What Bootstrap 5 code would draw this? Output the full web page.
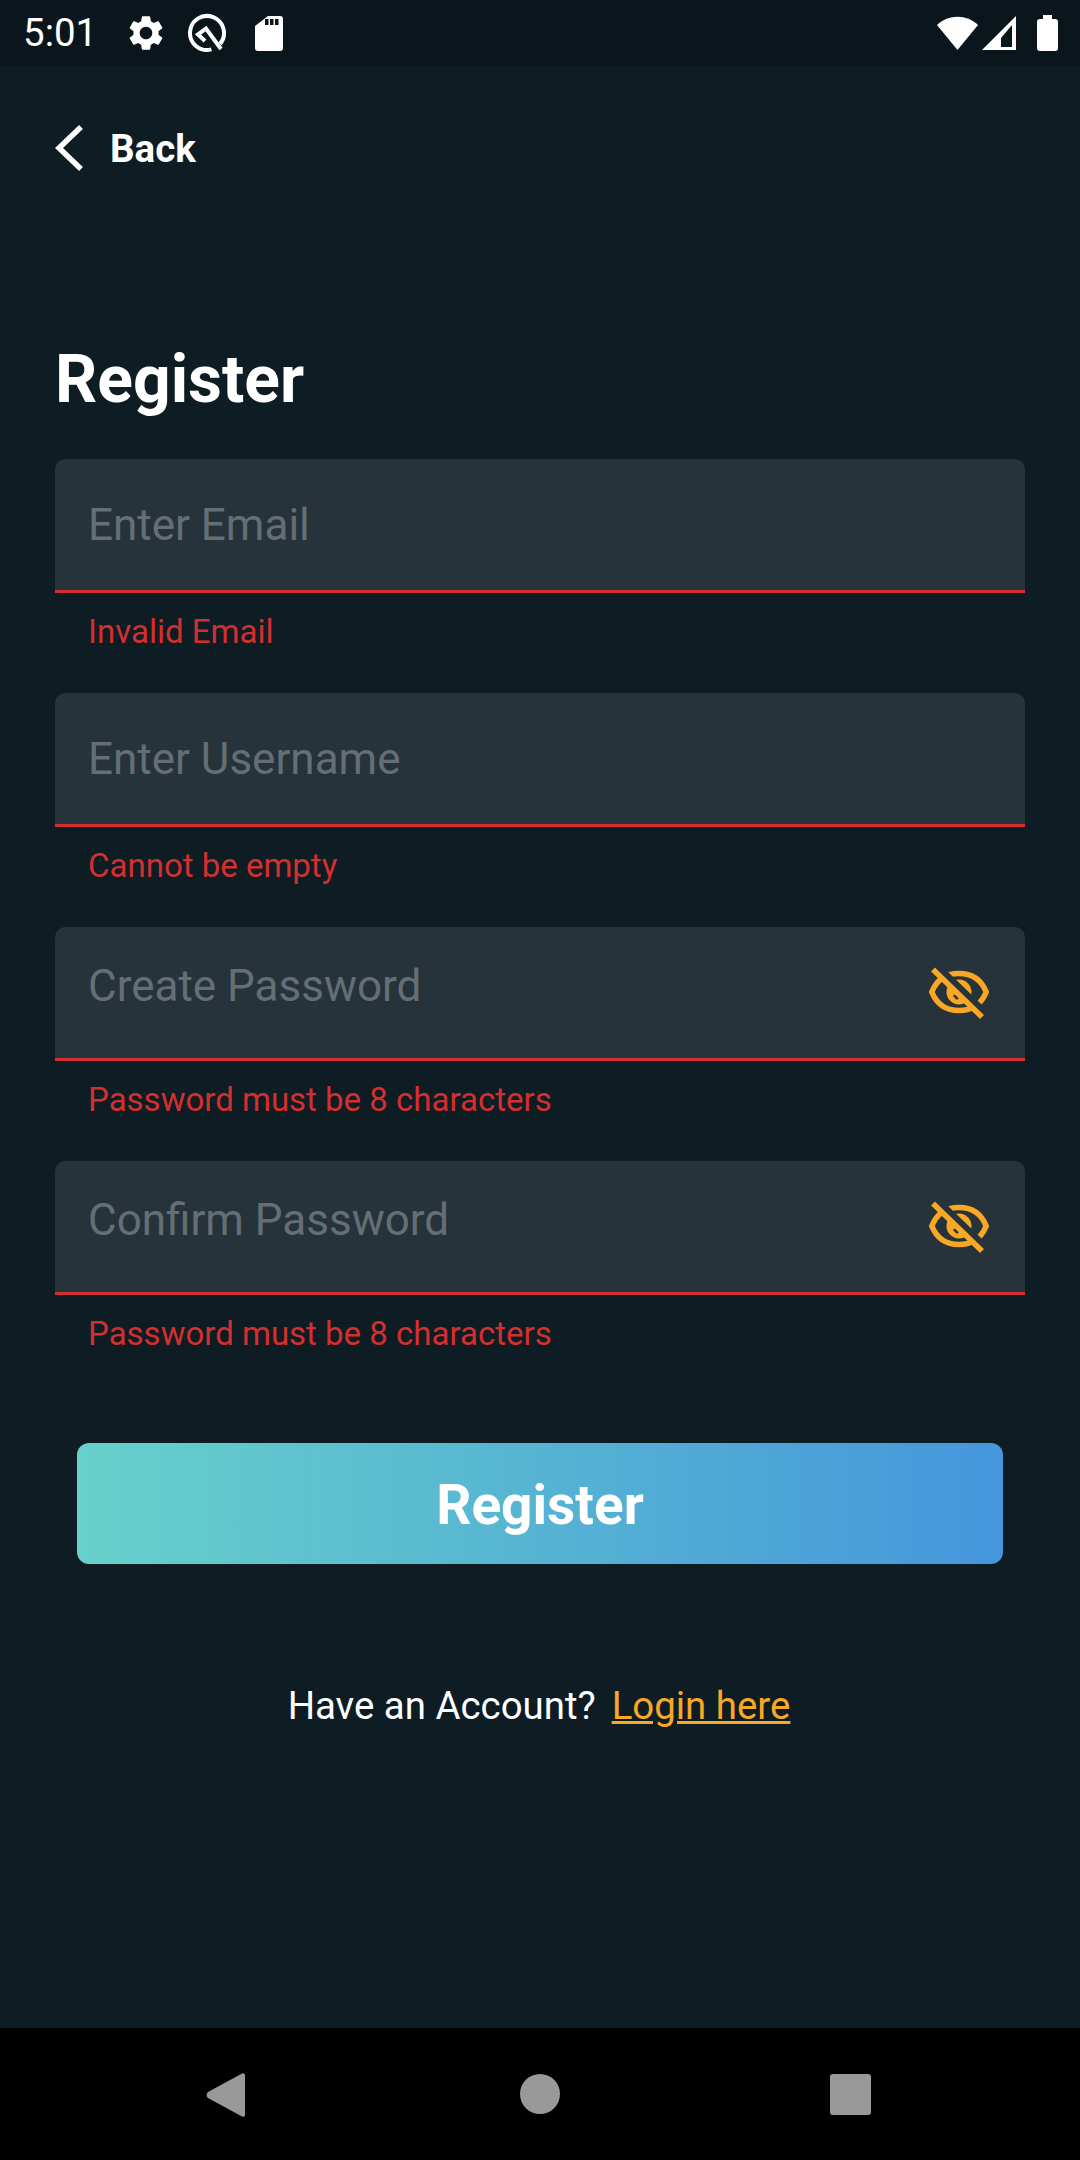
<!DOCTYPE html>
<html lang="en">
<head>
<meta charset="utf-8">
<title>Register</title>
<link href="https://cdn.jsdelivr.net/npm/bootstrap@5.3.0/dist/css/bootstrap.min.css" rel="stylesheet">
<style>
html,body{margin:0;height:2160px;background:#0e1c23;font-family:Roboto,"Liberation Sans",sans-serif;color:#fff}
.screen{height:2160px;width:1080px}
.status-strip{height:66px;background:#0a161b;padding:0 22px 0 23px;flex:none}
.status-time{font-size:38.500px;line-height:1;width:102px}
.status-left svg,.status-right svg{display:block}
.ico-q{margin-left:20px}
.ico-sd{margin-left:28px}
.ico-signal{margin-left:4px}
.ico-batt{margin-left:20px}
.main-area{flex:1 1 auto;padding:0 55px}
.back-row{height:84px;margin-top:40px;gap:27px;color:#fff;text-decoration:none;font-size:38.500px;font-weight:700;line-height:1}
.back-row span{padding-top:2px}
.back-row:hover{color:#fff}
.page-title{font-size:66px;font-weight:700;line-height:1;margin:157px 0 46px}
.field-wrap{height:134px;background:#27333a;border-radius:10px 10px 0 0;border-bottom:3px solid #d32f2f}
.field-input{background:transparent;border:0;border-radius:0;color:#fff;font-size:44px;line-height:52px;height:131px;padding:0 33px}
.field-input::placeholder{color:#646f75;opacity:1}
.field-input:focus{background:transparent;box-shadow:none;color:#fff}
.field-pass{padding-bottom:13px;padding-right:110px}
.eye-btn{position:absolute;right:36px;top:40px;line-height:0}
.field-error{color:#d32f2f;font-size:33px;line-height:38px;padding:20px 33px 0;height:100px}
.submit-btn{display:block;width:926px;height:121px;margin:48px auto 0 22px;padding:4px 0 0;border:0;border-radius:12px;background:linear-gradient(90deg,#67d1ca,#4596dc);color:#fff;font-size:55px;font-weight:700}
.login-row{margin-top:120px;font-size:38.400px;line-height:44px;gap:16px;padding-right:2px}
.login-row a{color:#f9a825}
.sys-nav{height:132px;background:#000;flex:none;position:relative}
.sys-nav svg{position:absolute}
.nav-back{left:205px;top:44px}
.nav-home{left:520px;top:46px}
.nav-recent{left:830px;top:46px}
</style>
</head>
<body>
<svg width="0" height="0" class="position-absolute">
  <defs>
    <symbol id="eye-off" viewBox="0 0 60 52">
      <circle cx="30" cy="25" r="12.500" fill="#f9a825"/>
      <path d="M2.800 25C8 12 18 6.500 30 6.500s22 5.500 27.200 18.500C52 38 42 43.500 30 43.500S8 38 2.800 25z" fill="none" stroke="#f9a825" stroke-width="5.500"/>
      <path d="M7.800-1.400L56.800 46.100" stroke="#27333a" stroke-width="6.500" fill="none"/>
      <path d="M25 28l4 4" stroke="#27333a" stroke-width="3" fill="none"/>
      <path d="M4 2.500L53 50" stroke="#f9a825" stroke-width="5.500" fill="none"/>
    </symbol>
  </defs>
</svg>
<div class="screen d-flex flex-column">
  <div class="status-strip d-flex align-items-center justify-content-between">
    <div class="status-left d-flex align-items-center">
      <span class="status-time">5:01</span>
      <svg width="42" height="42" viewBox="0 0 24 24" fill="#fff"><path d="M19.14 12.94c.04-.3.06-.61.06-.94 0-.32-.02-.64-.07-.94l2.03-1.58c.18-.14.23-.41.12-.61l-1.92-3.32c-.12-.22-.37-.29-.59-.22l-2.39.96c-.5-.38-1.03-.7-1.62-.94l-.36-2.54c-.04-.24-.24-.41-.48-.41h-3.84c-.24 0-.43.17-.47.41l-.36 2.54c-.59.24-1.13.57-1.62.94l-2.39-.96c-.22-.08-.47 0-.59.22L2.74 8.87c-.12.21-.08.47.12.61l2.03 1.58c-.05.3-.09.63-.09.94s.02.64.07.94l-2.03 1.58c-.18.14-.23.41-.12.61l1.92 3.32c.12.22.37.29.59.22l2.39-.96c.5.38 1.03.7 1.62.94l.36 2.54c.05.24.24.41.48.41h3.84c.24 0 .44-.17.47-.41l.36-2.54c.59-.24 1.13-.56 1.62-.94l2.39.96c.22.08.47 0 .59-.22l1.92-3.32c.12-.22.07-.47-.12-.61l-2.01-1.58zM12 15.6c-1.98 0-3.6-1.62-3.6-3.6s1.62-3.6 3.6-3.6 3.6 1.62 3.6 3.6-1.62 3.6-3.6 3.6z"/></svg>
      <svg class="ico-q" width="40" height="40" viewBox="0 0 40 40" fill="none" stroke="#fff" stroke-width="4"><path d="M24.400 36.400A17 17 0 1 1 33 30.900"/><path d="M34 36L19 15.500 11 21.500l7 6.500"/></svg>
      <svg class="ico-sd" width="28" height="35" viewBox="0 0 28 35" fill="#fff" fill-rule="evenodd"><path d="M13 0h12a3 3 0 0 1 3 3v29a3 3 0 0 1-3 3H3a3 3 0 0 1-3-3V10zM10 3v6h3.500V3zM15 3v6h3.500V3zM20 3v6h3.500V3z"/></svg>
    </div>
    <div class="status-right d-flex align-items-center">
      <svg width="41" height="36" viewBox="0 0 41 36" fill="#fff"><path d="M20.500 35L0 10C11 -1 30 -1 41 10z"/></svg>
      <svg class="ico-signal" width="35" height="36" viewBox="0 0 35 36"><path fill-rule="evenodd" fill="#fff" d="M0 35L34 1v34zM19 23L30 10v22H19z"/></svg>
      <svg class="ico-batt" width="21" height="36" viewBox="0 0 21 36" fill="#fff"><path d="M6 0h9v4h3a3 3 0 0 1 3 3v26a3 3 0 0 1-3 3H3a3 3 0 0 1-3-3V7a3 3 0 0 1 3-3h3z"/></svg>
    </div>
  </div>

  <main class="main-area">
    <a href="#" class="back-row d-flex align-items-center">
      <svg width="28" height="46" viewBox="0 0 28 46" fill="none" stroke="#fff" stroke-width="5.500"><path d="M26 2L4 23l22 21"/></svg>
      <span>Back</span>
    </a>
    <h1 class="page-title">Register</h1>
    <form>
      <div class="field-wrap position-relative"><input class="form-control field-input" type="email" placeholder="Enter Email"></div>
      <div class="field-error">Invalid Email</div>
      <div class="field-wrap position-relative"><input class="form-control field-input" type="text" placeholder="Enter Username"></div>
      <div class="field-error">Cannot be empty</div>
      <div class="field-wrap position-relative"><input class="form-control field-input field-pass" type="password" placeholder="Create Password">
        <span class="eye-btn"><svg width="60" height="52"><use href="#eye-off"/></svg></span>
      </div>
      <div class="field-error">Password must be 8 characters</div>
      <div class="field-wrap position-relative"><input class="form-control field-input field-pass" type="password" placeholder="Confirm Password">
        <span class="eye-btn"><svg width="60" height="52"><use href="#eye-off"/></svg></span>
      </div>
      <div class="field-error">Password must be 8 characters</div>
      <button type="button" class="submit-btn">Register</button>
    </form>
    <div class="login-row d-flex justify-content-center">
      <span>Have an Account?</span><a href="#">Login here</a>
    </div>
  </main>

  <div class="sys-nav">
    <svg class="nav-back" width="42" height="46" viewBox="0 0 42 46" fill="#999"><path d="M37 1.500a2 2 0 0 1 3 1.500v40a2 2 0 0 1-3 1.500L3 26a4 4 0 0 1 0-6z"/></svg>
    <svg class="nav-home" width="40" height="40" viewBox="0 0 40 40" fill="#999"><circle cx="20" cy="20" r="20"/></svg>
    <svg class="nav-recent" width="41" height="41" viewBox="0 0 41 41" fill="#999"><rect width="41" height="41" rx="3"/></svg>
  </div>
</div>
<script src="https://cdn.jsdelivr.net/npm/bootstrap@5.3.0/dist/js/bootstrap.bundle.min.js"></script>
</body>
</html>
